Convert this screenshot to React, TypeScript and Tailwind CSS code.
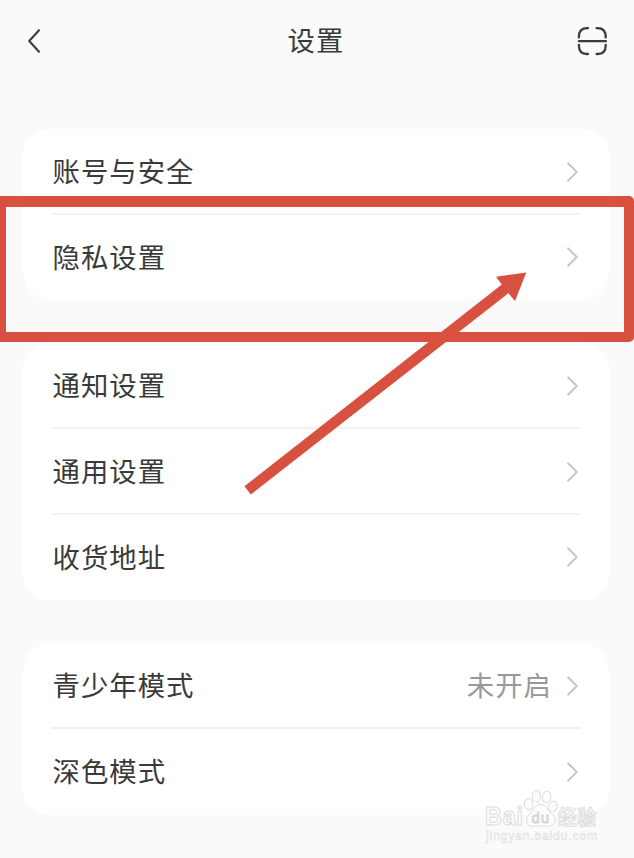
import { Fragment } from 'react'

type Item = {
  label: string
  value?: string
}

const groups: Item[][] = [
  [{ label: '账号与安全' }, { label: '隐私设置' }],
  [{ label: '通知设置' }, { label: '通用设置' }, { label: '收货地址' }],
  [{ label: '青少年模式', value: '未开启' }, { label: '深色模式' }],
]

function Chevron() {
  return (
    <svg width="14" height="22" viewBox="0 0 14 22" fill="none" className="shrink-0">
      <path d="M2 2.3 L10.8 11 L2 19.7" stroke="#c6c6c6" strokeWidth="1.9" strokeLinecap="round" strokeLinejoin="round" />
    </svg>
  )
}

function ScanIcon() {
  return (
    <svg width="32" height="32" viewBox="0 0 32 32" fill="none" stroke="#3c3c3c" strokeWidth="2.3" strokeLinecap="round">
      <path d="M12 3.2 H11 C5.5 3.2 2.9 6 2.9 12 V12.4" />
      <path d="M20.6 3.2 H21.6 C27.1 3.2 29.7 6 29.7 12 V12.4" />
      <path d="M12 29 H11 C5.5 29 2.9 26.2 2.9 20.2 V19.8" />
      <path d="M20.6 29 H21.6 C27.1 29 29.7 26.2 29.7 20.2 V19.8" />
      <path d="M2.9 16.2 H29.9" />
    </svg>
  )
}

function Annotation() {
  return (
    <>
      <div className="absolute -left-1 top-[196px] h-[146px] w-[638px] rounded-[5px] border-[10px] border-t-[11px] border-[#d85140]" />
      <svg className="absolute left-0 top-0" width="634" height="858" viewBox="0 0 634 858">
        <path
          d="M244.4 486.3 L501.8 284.5 L496 276.8 L526.3 272.4 L515 301 L508.4 293.2 L250.8 494.6 Z"
          fill="#d85140"
        />
      </svg>
    </>
  )
}

function Watermark() {
  return (
    <svg
      className="absolute left-[480px] top-[785px]"
      width="125"
      height="62"
      viewBox="0 0 125 62"
      fill="#fdfdfd"
      stroke="#dcdcdc"
      strokeWidth="1"
      fontFamily="'Liberation Sans', 'Noto Sans CJK SC', sans-serif"
    >
      <text x="5" y="40" fontSize="25" fontWeight="bold" textLength="39" lengthAdjust="spacingAndGlyphs">
        Bai
      </text>
      <ellipse cx="48.6" cy="19.3" rx="4.4" ry="5.7" transform="rotate(-8 48.6 19.3)" />
      <ellipse cx="56.4" cy="11.2" rx="4.2" ry="6" />
      <ellipse cx="66.6" cy="12" rx="4.3" ry="5.7" transform="rotate(10 66.6 12)" />
      <ellipse cx="72.8" cy="21.6" rx="4.4" ry="5.3" transform="rotate(18 72.8 21.6)" />
      <path d="M60.5 19.5 C66 19.5 67 24 70.5 27.5 C74 30.5 75.8 33 74.7 37 C73 42.5 67 41 60.5 41 C54 41 48 42.5 46.7 37 C46 33 48 30.5 51.5 27 C54.5 24 55 19.5 60.5 19.5 Z" />
      <text x="51.5" y="37.5" fontSize="15" textLength="18.5" lengthAdjust="spacingAndGlyphs" stroke="#d4d4d4">
        du
      </text>
      <text x="78" y="39.5" fontSize="20" fontWeight="bold" textLength="39" lengthAdjust="spacingAndGlyphs">
        经验
      </text>
      <text x="6" y="55" fontSize="12.5" strokeWidth="0.6" stroke="#e0e0e0" textLength="112" lengthAdjust="spacingAndGlyphs">
        jingyan.baidu.com
      </text>
    </svg>
  )
}

export default function App() {
  return (
    <div className="relative h-[858px] w-[634px] overflow-hidden bg-[#fafafa] font-['Noto_Sans_CJK_SC',sans-serif] text-[27.4px] tracking-[1px] text-[#3a3a3a]">
      <header className="flex h-[82px] items-center justify-between px-[26px]">
        <button type="button" className="flex w-8">
          <svg width="16" height="28" viewBox="0 0 16 28" fill="none">
            <path d="M13 3.2 L3.2 14 L13 24.8" stroke="#3c3c3c" strokeWidth="2.1" strokeLinecap="round" strokeLinejoin="round" />
          </svg>
        </button>
        <h1 className="pb-0.5 pr-0.5 leading-none">设置</h1>
        <button type="button">
          <ScanIcon />
        </button>
      </header>

      <main className="flex flex-col gap-[43px] pl-[23px] pr-[25px] pt-[47px]">
        {groups.map((group, i) => (
          <section key={i} className="rounded-[27px] bg-white px-[29px]">
            {group.map((item, j) => (
              <Fragment key={item.label}>
                {j > 0 && <div className="-mb-0.5 h-[2px] -translate-y-[2px] bg-[#f2f2f2]" />}
                <div className="flex h-[85.67px] items-center">
                  <span className="flex-1 pb-[2px] pl-[0.5px] leading-none">{item.label}</span>
                  {item.value && <span className="mr-3.5 pb-[2px] leading-none text-[#999]">{item.value}</span>}
                  <Chevron />
                </div>
              </Fragment>
            ))}
          </section>
        ))}
      </main>

      <Annotation />
      <Watermark />
    </div>
  )
}
